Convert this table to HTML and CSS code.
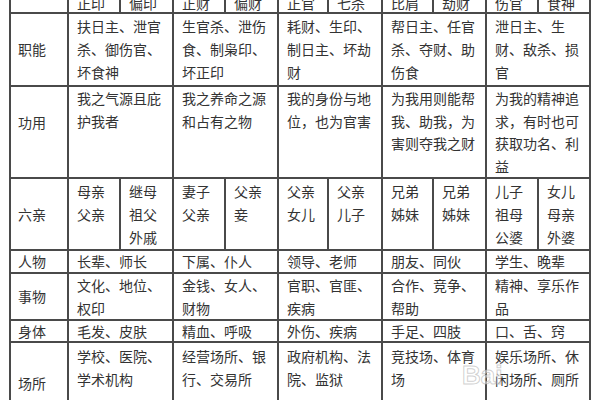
FILE: index.html
```html
<!DOCTYPE html>
<html lang="zh">
<head>
<meta charset="utf-8">
<link rel="stylesheet" href="styles.css">
</head>
<body>
<div class="page">
<table class="grid">
<colgroup>
<col class="c-label">
<col class="c52"><col class="c53"><col class="c52"><col class="c53"><col class="c50"><col class="c54"><col class="c51"><col class="c53"><col class="c52"><col class="c52">
</colgroup>
<tr class="r-head">
<td class="label"></td>
<td>正印</td><td>偏印</td><td>正财</td><td>偏财</td><td>正官</td><td>七杀</td><td>比肩</td><td>劫财</td><td>伤官</td><td>食神</td>
</tr>
<tr class="r-3a">
<td class="label">职能</td>
<td colspan="2">扶日主、泄官<br>杀、御伤官、<br>坏食神</td>
<td colspan="2">生官杀、泄伤<br>食、制枭印、<br>坏正印</td>
<td colspan="2">耗财、生印、<br>制日主、坏劫<br>财</td>
<td colspan="2">帮日主、任官<br>杀、夺财、助<br>伤食</td>
<td colspan="2">泄日主、生<br>财、敌杀、损<br>官</td>
</tr>
<tr class="r-4">
<td class="label up">功用</td>
<td colspan="2">我之气源且庇<br>护我者</td>
<td colspan="2">我之养命之源<br>和占有之物</td>
<td colspan="2">我的身份与地<br>位，也为官害</td>
<td colspan="2">为我用则能帮<br>我、助我，为<br>害则夺我之财</td>
<td colspan="2">为我的精神追<br>求，有时也可<br>获取功名、利<br>益</td>
</tr>
<tr class="r-3b">
<td class="label">六亲</td>
<td>母亲<br>父亲</td><td>继母<br>祖父<br>外戚</td>
<td>妻子<br>父亲</td><td>父亲<br>妾</td>
<td>父亲<br>女儿</td><td>父亲<br>儿子</td>
<td>兄弟<br>姊妹</td><td>兄弟<br>姊妹</td>
<td>儿子<br>祖母<br>公婆</td><td>女儿<br>母亲<br>外婆</td>
</tr>
<tr class="r-1a">
<td class="label">人物</td>
<td colspan="2">长辈、师长</td>
<td colspan="2">下属、仆人</td>
<td colspan="2">领导、老师</td>
<td colspan="2">朋友、同伙</td>
<td colspan="2">学生、晚辈</td>
</tr>
<tr class="r-2">
<td class="label">事物</td>
<td colspan="2">文化、地位、<br>权印</td>
<td colspan="2">金钱、女人、<br>财物</td>
<td colspan="2">官职、官匪、<br>疾病</td>
<td colspan="2">合作、竞争、<br>帮助</td>
<td colspan="2">精神、享乐作<br>品</td>
</tr>
<tr class="r-1b">
<td class="label">身体</td>
<td colspan="2">毛发、皮肤</td>
<td colspan="2">精血、呼吸</td>
<td colspan="2">外伤、疾病</td>
<td colspan="2">手足、四肢</td>
<td colspan="2">口、舌、窍</td>
</tr>
<tr class="r-place">
<td class="label">场所</td>
<td colspan="2">学校、医院、<br>学术机构</td>
<td colspan="2">经营场所、银<br>行、交易所</td>
<td colspan="2">政府机构、法<br>院、监狱</td>
<td colspan="2">竞技场、体育<br>场</td>
<td colspan="2">娱乐场所、休<br>闲场所、厕所</td>
</tr>
</table>
<span class="watermark">Bai</span>
</div>
</body>
</html>
```
FILE: styles.css
```css
html, body {
  margin: 0;
  padding: 0;
  background: #ffffff;
  overflow: hidden;
}
.page {
  position: relative;
  width: 600px;
  height: 400px;
  overflow: hidden;
}
.grid {
  border-collapse: collapse;
  table-layout: fixed;
  width: 582px;
  margin: -7px 0 0 9px;
  font-family: "Noto Sans CJK SC", "Noto Sans", sans-serif;
  font-size: 14px;
  color: #333333;
}
.c-label { width: 58px; }
.c50 { width: 50px; }
.c51 { width: 51px; }
.c52 { width: 52px; }
.c53 { width: 53px; }
.c54 { width: 54px; }
.grid td {
  border: 2px solid #4a4a4a;
  padding: 0 0 0 8px;
  vertical-align: top;
  line-height: 23px;
  white-space: nowrap;
  overflow: hidden;
}
.grid td.label {
  vertical-align: middle;
  padding-left: 7px;
}
.grid td.up {
  padding-bottom: 20px;
}
.r-head td { line-height: 17px; }
.r-3a td { padding-top: 1px; padding-bottom: 1px; }
.r-4 td { line-height: 22.5px; }
.r-3b td { padding-top: 1px; }
.r-1a td { line-height: 21px; }
.r-2 td { line-height: 22.5px; }
.r-1b td { line-height: 20px; }
.r-place td { height: 78px; padding-top: 2px; }
.r-place td.label { padding-top: 0; padding-bottom: 0; }
.watermark {
  position: absolute;
  left: 462px;
  top: 360px;
  font-family: "Liberation Sans", Arial, sans-serif;
  font-weight: bold;
  font-size: 26px;
  color: rgba(255, 255, 255, 0.55);
  -webkit-text-stroke: 1px rgba(170, 170, 170, 0.55);
}
```
